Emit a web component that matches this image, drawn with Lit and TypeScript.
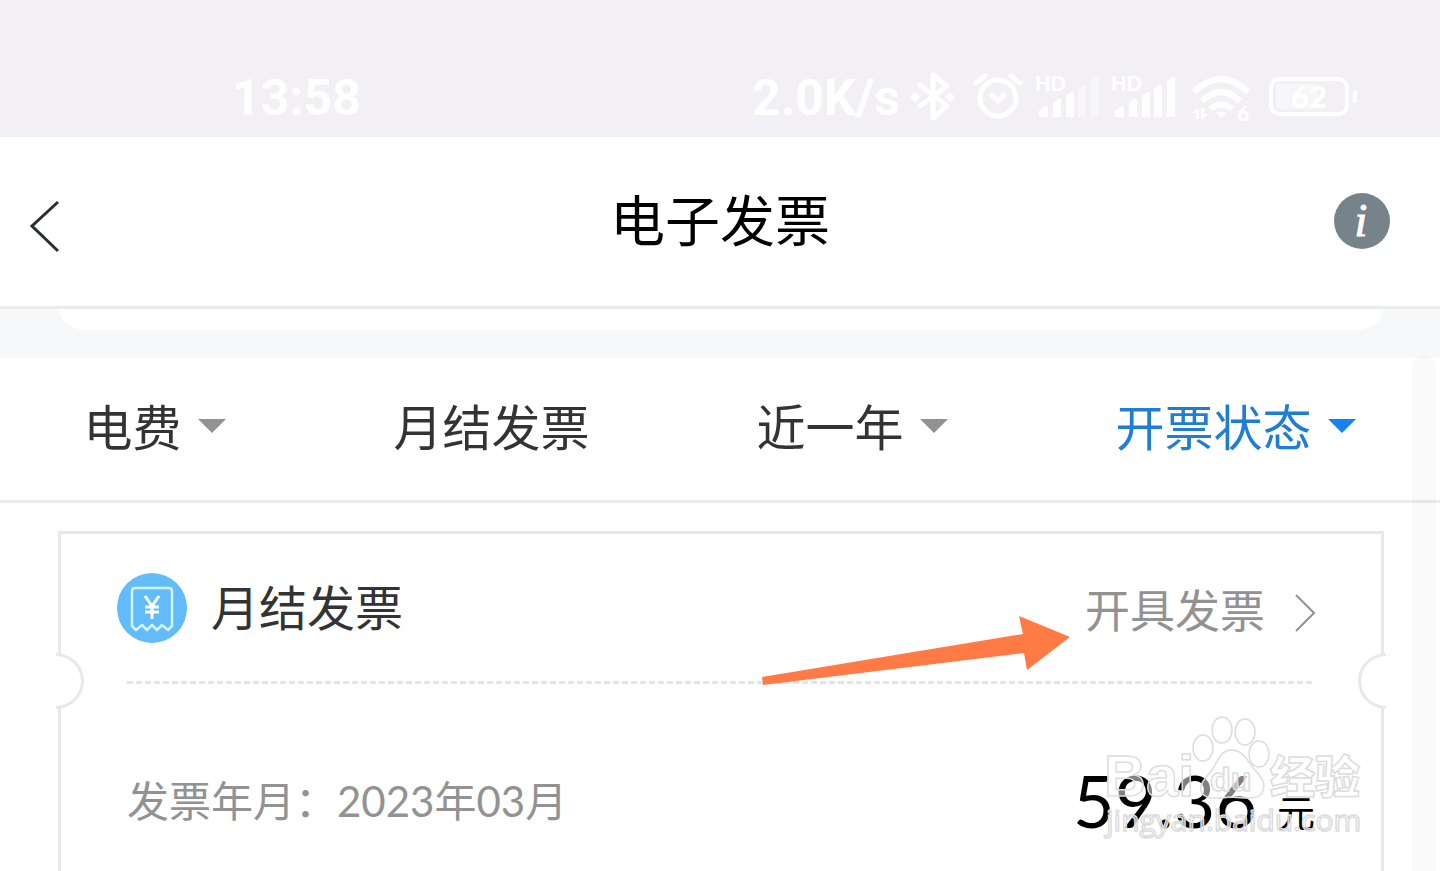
import { LitElement, html, css, svg } from "lit";
import { customElement, property } from "lit/decorators.js";
import { classMap } from "lit/directives/class-map.js";

@customElement("status-bar")
class StatusBar extends LitElement {
  static styles = css`
    :host {
      display: flex;
      justify-content: space-between;
      align-items: center;
      padding: 70px 84px 11px 232px;
      background: #f2f0f5;
      color: #fff;
      font: 700 50px/56px Roboto, "Noto Sans CJK SC", sans-serif;
    }
    .right {
      display: flex;
      align-items: center;
      gap: 10px;
    }
    svg {
      display: block;
      height: 56px;
      overflow: visible;
      fill: #fff;
      font-family: Lato, sans-serif;
      font-weight: 900;
    }
    .line {
      fill: none;
      stroke: #fff;
      stroke-width: 5;
      stroke-linecap: round;
      stroke-linejoin: round;
    }
    .arc {
      fill: none;
      stroke: #fff;
      stroke-width: 6;
    }
    .dim {
      opacity: 0.4;
    }
  `;

  private signal(level: number) {
    const bars = [
      "M5 47V41L11 36H14V47Z",
      "M19 47V33L24 29H27V47Z",
      "M32 47V26L37 22H40V47Z",
      "M44 47V19L49 15H52V47Z",
      "M57 47V11L62 7H65V47Z",
    ];
    return html`<svg width="66" viewBox="0 0 66 56" aria-hidden="true">
      <text x="1" y="21" font-size="20">HD</text>
      ${bars.map((d, i) => svg`<path class=${i < level ? "" : "dim"} d=${d} />`)}
    </svg>`;
  }

  render() {
    return html`
      <span>13:58</span>
      <div class="right">
        <span>2.0K/s</span>
        <svg width="52" viewBox="0 0 52 56" aria-hidden="true">
          <path class="line" d="M10 15L37 36L23 48V5L37 16L10 36" />
          <path d="M5 22L10 27L5 32L0 27ZM40 22L45 27L40 32L35 27Z" />
        </svg>
        <svg width="52" viewBox="0 0 52 56" aria-hidden="true">
          <circle class="line" cx="26" cy="28" r="18" />
          <path class="line" d="M20 25L26 31L32 25M4 13L13 6M39 6L48 13" />
        </svg>
        ${this.signal(3)} ${this.signal(5)}
        <svg width="70" viewBox="-4 0 70 56" aria-hidden="true">
          <path class="arc" d="M4 22Q31 -4 58 22M12 31Q31 13 50 31M20 39Q31 30 42 39" />
          <path d="M26 43Q31 40 36 43L31 48Z" />
          <path d="M2 43L6 39H9V49H6V43ZM11 38H14V44H18L14 48V49H11Z" />
          <text x="47" y="51" font-size="21">6</text>
        </svg>
        <svg width="90" viewBox="0 0 90 56" aria-hidden="true">
          <rect x="5" y="9" width="76" height="35" rx="9" fill="none" stroke="#fff" stroke-width="4" />
          <rect class="dim" x="10" y="14" width="42" height="25" rx="4" />
          <rect x="87" y="20" width="4" height="13" rx="2" />
          <text x="43" y="38" font-size="31" text-anchor="middle">62</text>
        </svg>
      </div>
    `;
  }
}

@customElement("nav-header")
class NavHeader extends LitElement {
  static styles = css`
    :host {
      display: grid;
      grid-template-columns: 1fr auto 1fr;
      align-items: center;
      padding: 55px 0 57px;
      border-bottom: 3px solid #ebebeb;
      background: #fff;
    }
    h1 {
      margin: 0;
      font-size: 55px;
      line-height: 57px;
      font-weight: 400;
      color: #000;
    }
    button {
      padding: 0;
      border: 0;
      background: none;
    }
    .back {
      justify-self: start;
      margin-left: 27px;
    }
    .info {
      justify-self: end;
      margin-right: 50px;
    }
    svg {
      display: block;
      overflow: visible;
    }
  `;

  render() {
    return html`
      <button class="back" aria-label="返回">
        <svg width="36" height="56" viewBox="0 0 36 56">
          <path d="M31 9L5 33L31 58" fill="none" stroke="#2b2d2e" stroke-width="3" />
        </svg>
      </button>
      <h1>电子发票</h1>
      <button class="info" aria-label="说明">
        <svg width="56" height="56" viewBox="0 0 56 56">
          <circle cx="28" cy="28" r="28" fill="#76838b" />
          <text x="27" y="43" text-anchor="middle" fill="#fff" stroke="#fff" font-family="Liberation Serif, serif"
            font-size="46" font-style="italic">i</text>
        </svg>
      </button>
    `;
  }
}

@customElement("filter-item")
class FilterItem extends LitElement {
  @property() label = "";
  @property({ type: Boolean }) menu = false;
  @property({ type: Boolean }) active = false;

  static styles = css`
    .item {
      display: flex;
      align-items: center;
      gap: 16px;
      color: #333;
    }
    .active {
      color: #1f7dd3;
    }
    select,
    button {
      appearance: none;
      margin: 0;
      padding: 0;
      border: 0;
      background: none;
      color: inherit;
      font: inherit;
      font-size: 49px;
      line-height: 72px;
    }
    svg {
      display: block;
      fill: #929292;
    }
    .active svg {
      fill: #1283f0;
    }
  `;

  render() {
    return html`<div class=${classMap({ item: true, active: this.active })}>
      ${this.menu
        ? html`<select aria-label=${this.label}><option>${this.label}</option></select>
            <svg width="28" height="20" viewBox="0 0 28 20" aria-hidden="true"><path d="M0 2H28L14 16Z" /></svg>`
        : html`<button>${this.label}</button>`}
    </div>`;
  }
}

@customElement("invoice-card")
class InvoiceCard extends LitElement {
  static styles = css`
    :host {
      display: block;
      position: relative;
      border: 3px solid #e8e8e8;
      border-bottom: 0;
      background: #fff;
    }
    .head {
      display: flex;
      align-items: center;
      gap: 24px;
      padding: 35px 66px 34px 56px;
    }
    h2 {
      flex: 1;
      margin: 0;
      font-size: 48px;
      line-height: 72px;
      font-weight: 400;
      color: #333;
    }
    .issue {
      display: flex;
      align-items: center;
      gap: 30px;
      padding-top: 6px;
      font-size: 45px;
      line-height: 72px;
      color: #929292;
      text-decoration: none;
    }
    svg {
      display: block;
    }
    .rule {
      height: 3px;
      margin: 0 66px;
      background: repeating-linear-gradient(90deg, #e4e4e4 0 6px, transparent 6px 9px);
    }
    .body {
      display: flex;
      justify-content: space-between;
      padding: 75px 66px;
    }
    .month {
      font-size: 42px;
      line-height: 84px;
      color: #929292;
    }
    .price {
      display: flex;
      align-items: flex-end;
      align-self: flex-start;
      gap: 20px;
      font-size: 72px;
      line-height: 82px;
      color: #000;
    }
    .unit {
      font-size: 38px;
      line-height: 58px;
    }
    .notch {
      position: absolute;
      top: 119px;
      box-sizing: border-box;
      width: 28px;
      height: 56px;
      border: 3px solid #e8e8e8;
      background: #fff;
    }
    .left {
      left: -5px;
      border-left: 0;
      border-radius: 0 28px 28px 0;
    }
    .right {
      right: -5px;
      border-right: 0;
      border-radius: 28px 0 0 28px;
    }
  `;

  render() {
    return html`
      <div class="head">
        <svg width="70" height="70" viewBox="0 0 70 70" aria-hidden="true">
          <circle cx="35" cy="35" r="35" fill="#62bcfa" />
          <path
            d="M18 15H52Q55 15 55 18V53L51 57L45 52L40 57L35 52L30 57L25 52L19 57L15 53V18Q15 15 18 15Z"
            fill="none" stroke="#d3f4fd" stroke-width="2.5" stroke-linejoin="round" />
          <path d="M28 23L35 33L42 23M28 34H42M28 39H42M35 33V46" fill="none" stroke="#fff" stroke-width="3" />
        </svg>
        <h2>月结发票</h2>
        <a class="issue" href="#issue">
          开具发票
          <svg width="20" height="42" viewBox="0 0 20 42" aria-hidden="true">
            <path d="M1 5L19 23L1 41" fill="none" stroke="#929292" stroke-width="2" />
          </svg>
        </a>
      </div>
      <div class="rule"></div>
      <div class="body">
        <span class="month">发票年月：2023年03月</span>
        <span class="price"><span>59.36</span><span class="unit">元</span></span>
      </div>
      <span class="notch left"></span>
      <span class="notch right"></span>
    `;
  }
}

@customElement("app-root")
class AppRoot extends LitElement {
  static styles = css`
    :host {
      display: flex;
      flex-direction: column;
      position: relative;
      height: 100vh;
      overflow: hidden;
      background: #fff;
      font-family: Lato, "Noto Sans CJK SC", sans-serif;
    }
    .strip {
      padding: 0 57px 28px 59px;
      background: #f6f8fa;
    }
    .tail {
      height: 21px;
      border-radius: 0 0 28px 28px / 0 0 21px 21px;
      background: #fff;
    }
    .filters {
      display: flex;
      justify-content: space-around;
      padding: 33px 0 37px;
      border-bottom: 3px solid #ebebeb;
    }
    invoice-card {
      flex: 1;
      margin: 28px 56px 0 58px;
    }
    .scrollbar {
      position: absolute;
      top: 355px;
      right: 4px;
      bottom: 0;
      width: 24px;
      border-radius: 12px 12px 0 0;
      background: rgba(0, 0, 0, 0.02);
    }
    .pointer {
      position: absolute;
      top: 616px;
      right: 369px;
    }
    .watermark {
      position: absolute;
      top: 710px;
      right: 70px;
      fill: rgba(255, 255, 255, 0.5);
      stroke: #dcdcdc;
      stroke-width: 1.5;
    }
    .logo {
      font-family: "Liberation Sans", sans-serif;
      font-weight: 700;
    }
    .cjk {
      font-family: "Noto Sans CJK SC", sans-serif;
      font-weight: 900;
    }
    .url {
      font-family: "Open Sans", sans-serif;
    }
  `;

  render() {
    return html`
      <status-bar></status-bar>
      <nav-header></nav-header>
      <div class="strip"><div class="tail"></div></div>
      <div class="filters">
        <filter-item label="电费" menu></filter-item>
        <filter-item label="月结发票"></filter-item>
        <filter-item label="近一年" menu></filter-item>
        <filter-item label="开票状态" menu active></filter-item>
      </div>
      <invoice-card></invoice-card>
      <div class="scrollbar"></div>
      <svg class="pointer" width="309" height="70" viewBox="0 0 309 70" aria-hidden="true">
        <path d="M0 61L261 18L257 0L308 21L265 54L262 37L1 69Z" fill="#ff7a45" />
      </svg>
      <svg class="watermark" width="270" height="132" viewBox="0 0 270 132">
        <text class="logo" x="4" y="86" font-size="58">Bai</text>
        <ellipse cx="103" cy="38" rx="10" ry="13" />
        <ellipse cx="122" cy="20" rx="10" ry="13" />
        <ellipse cx="145" cy="22" rx="10" ry="13" />
        <ellipse cx="159" cy="44" rx="10" ry="13" />
        <path d="M131 40C143 40 147 50 154 59C164 69 166 76 162 83C158 90 146 88 131 87C116 89 104 90 101 81C99 73 107 67 112 60C118 51 121 40 131 40Z" />
        <text class="logo" x="110" y="81" font-size="34">du</text>
        <text class="cjk" x="170" y="84" font-size="45">经验</text>
        <text class="url" x="6" y="121" font-size="30">jingyan.baidu.com</text>
      </svg>
    `;
  }
}
